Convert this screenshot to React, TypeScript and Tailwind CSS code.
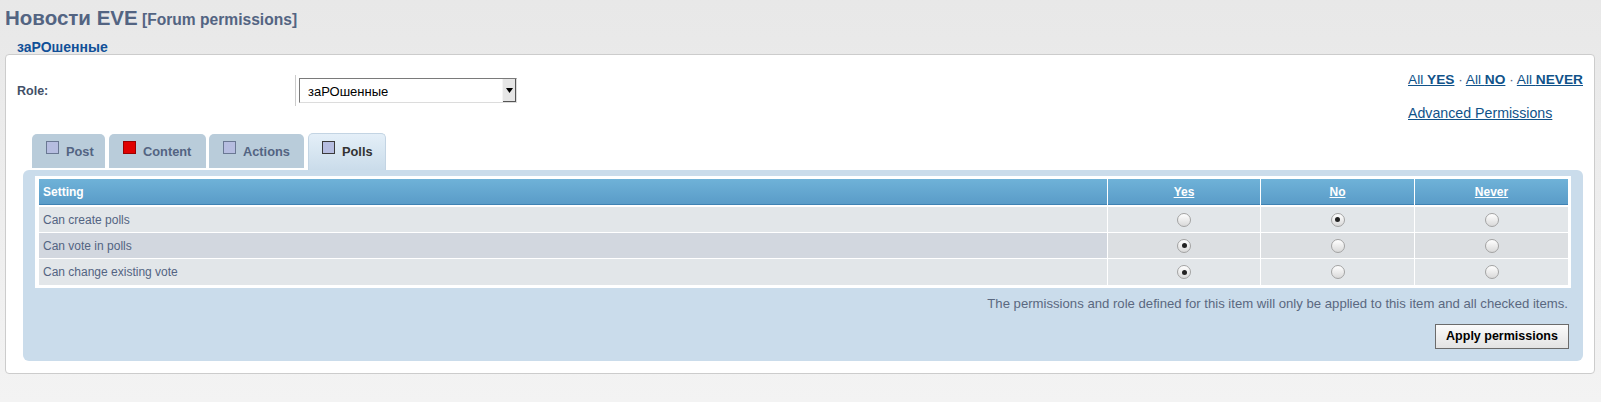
import React from "react";

function Radio({ checked }: { checked?: boolean }) {
  return (
    <span className="flex h-[14px] w-[14px] items-center justify-center rounded-full border border-[#a3a3a3] bg-gradient-to-b from-[#ffffff] to-[#d9d9d9]">
      {checked ? <span className="h-[5px] w-[5px] rounded-full bg-[#222222]" /> : null}
    </span>
  );
}

function Tab({
  label,
  width,
  color,
  active,
}: {
  label: string;
  width: string;
  color: "blue" | "red";
  active?: boolean;
}) {
  const sq =
    color === "red"
      ? "border-[#9a0000] bg-[#e00000]"
      : active
      ? "border-[#3a3a3a] bg-[#b6bde0]"
      : "border-[#6a7893] bg-[#b6bde0]";
  return (
    <div
      className={
        active
          ? `${width} flex h-[37px] items-start rounded-t-[5px] border border-b-0 border-[#c3d4e3] bg-gradient-to-b from-[#e4eff8] to-[#cadcea] pl-[13px] pt-[7px]`
          : `${width} mb-[2px] flex h-[34px] items-start rounded-t-[5px] bg-[#b9ccda] pl-[14px] pt-[7px]`
      }
    >
      <span className={`h-[13px] w-[13px] shrink-0 border ${sq}`} />
      <span
        className={
          active
            ? "ml-[7px] mt-[3px] text-[12.8px] font-bold leading-[15px] text-[#333333]"
            : "ml-[7px] mt-[3px] text-[12.8px] font-bold leading-[15px] text-[#536482]"
        }
      >
        {label}
      </span>
    </div>
  );
}

const rows = [
  { label: "Can create polls", val: 1, alt: false },
  { label: "Can vote in polls", val: 0, alt: true },
  { label: "Can change existing vote", val: 0, alt: false },
];

export default function App() {
  return (
    <div className="h-[402px] w-[1601px] overflow-hidden bg-gradient-to-b from-[#e8e8e8] to-[#f3f3f3] font-['Liberation_Sans',Arial,sans-serif]">
      {/* Title */}
      <div className="h-[30px] whitespace-nowrap pl-[5px] pt-[6px] leading-[24px] text-[#536482]">
        <span className="text-[20.5px] font-bold">Новости EVE</span>
        <span className="text-[15.6px] font-bold"> [Forum permissions]</span>
      </div>
      {/* Legend */}
      <div className="h-[24px] pl-[17px] pt-[10px] text-[14px] font-bold leading-[15px] text-[#115098]">
        заРОшенные
      </div>
      {/* Box */}
      <div className="ml-[5px] h-[320px] w-[1590px] rounded-[4px] border border-[#cccccc] bg-white">
        {/* Top row */}
        <div className="flex h-[77px] justify-between pl-[11px] pr-[11px]">
          <div className="mt-[20px] flex h-[31px]">
            <div className="w-[278px] pt-[9px] text-[12.5px] font-bold leading-[15px] text-[#425067]">
              Role:
            </div>
            <div className="h-[31px] border-l border-[#cccccc] pl-[3px] pt-[3px]">
              <div className="flex h-[25px] w-[218px] items-stretch border border-[#7a7a7a] border-r-[#dcdcdc] border-b-[#dcdcdc] bg-white">
                <div className="flex-1 pl-[8px] pt-[5px] text-[13px] leading-[15px] text-black">
                  заРОшенные
                </div>
                <div className="flex w-[14px] items-center justify-center border-l border-[#f5f5f5] bg-[#e6e6e6] shadow-[inset_-1px_-1px_0_#555]">
                  <svg width="7" height="5" viewBox="0 0 7 5">
                    <path d="M0 0 L7 0 L3.5 5 Z" fill="#000" />
                  </svg>
                </div>
              </div>
            </div>
          </div>
          <div className="mt-[16px] whitespace-nowrap leading-[17px] text-[#105289]">
            <div className="text-[13.7px]">
              <span className="underline">
                All <b>YES</b>
              </span>
              <span className="text-[#536482]"> · </span>
              <span className="underline">
                All <b>NO</b>
              </span>
              <span className="text-[#536482]"> · </span>
              <span className="underline">
                All <b>NEVER</b>
              </span>
            </div>
            <div className="mt-[17px] text-[14.2px] underline">Advanced Permissions</div>
          </div>
        </div>
        {/* Tabs */}
        <div className="flex h-[38px] items-end pl-[26px]">
          <Tab label="Post" width="w-[73px]" color="blue" />
          <div className="w-[4px]" />
          <Tab label="Content" width="w-[97px]" color="red" />
          <div className="w-[3px]" />
          <Tab label="Actions" width="w-[95px]" color="blue" />
          <div className="w-[4px]" />
          <Tab label="Polls" width="w-[78px]" color="blue" active />
        </div>
        {/* Panel */}
        <div className="ml-[17px] mr-[11px] h-[191px] rounded-[6px] bg-[#cadceb] px-[12px] pt-[6px]">
          <div className="bg-white pb-[3px] pl-[4px] pr-[3px] pt-[3px]">
            <div className="grid h-[26px] grid-cols-[1fr_152px_153px_153px] gap-x-[1px] text-[12px] font-bold leading-[14px] text-white">
              <div className="flex items-center border-b border-[#3f82b3] bg-gradient-to-b from-[#6fb2d8] to-[#5a9cc8] pl-[4px]">
                Setting
              </div>
              <div className="flex items-center justify-center border-b border-[#3f82b3] bg-gradient-to-b from-[#6fb2d8] to-[#5a9cc8]">
                <span className="underline">Yes</span>
              </div>
              <div className="flex items-center justify-center border-b border-[#3f82b3] bg-gradient-to-b from-[#6fb2d8] to-[#5a9cc8]">
                <span className="underline">No</span>
              </div>
              <div className="flex items-center justify-center border-b border-[#3f82b3] bg-gradient-to-b from-[#6fb2d8] to-[#5a9cc8]">
                <span className="underline">Never</span>
              </div>
            </div>
            <div className="mt-[2px] flex flex-col gap-y-[1px]">
              {rows.map((r, i) => (
                <div
                  key={i}
                  className={`grid grid-cols-[1fr_152px_153px_153px] gap-x-[1px] text-[12px] leading-[14px] text-[#536482] ${
                    i === 2 ? "h-[26px]" : "h-[25px]"
                  }`}
                >
                  <div
                    className={`flex items-center pl-[4px] ${
                      r.alt ? "bg-[#d2d7df]" : "bg-[#e2e6e9]"
                    }`}
                  >
                    {r.label}
                  </div>
                  {[0, 1, 2].map((c) => (
                    <div
                      key={c}
                      className={`flex items-center justify-center ${
                        r.alt ? "bg-[#dcdfe2]" : "bg-[#e2e6e9]"
                      }`}
                    >
                      <Radio checked={r.val === c} />
                    </div>
                  ))}
                </div>
              ))}
            </div>
          </div>
          <div className="mr-[3px] mt-[8px] text-right text-[13.15px] leading-[15px] text-[#5a6880]">
            The permissions and role defined for this item will only be applied to this item and all checked items.
          </div>
          <div className="mr-[2px] mt-[13px] flex justify-end">
            <button className="h-[25px] w-[134px] border border-[#6b6b6b] bg-gradient-to-b from-[#fbfbfb] to-[#e3e3e3] text-[12.5px] font-bold leading-[15px] text-black">
              Apply permissions
            </button>
          </div>
        </div>
      </div>
    </div>
  );
}
